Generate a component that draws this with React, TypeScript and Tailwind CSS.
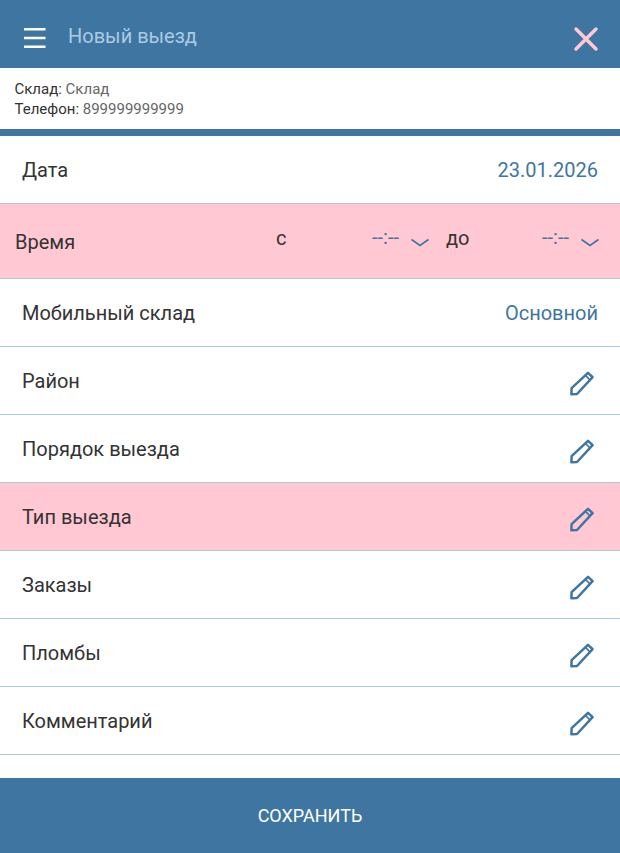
const Pencil = () => (
  <svg width="26" height="26" viewBox="0 0 26 26" fill="none" stroke="#3f76a1" strokeWidth="2.5" strokeLinejoin="round" className="mr-[3px] mt-[5px]">
    <path d="M2.4 24.2 L2.6 18.2 L19 2.8 L23.6 7.2 L8 24 Z" />
    <path d="M16.4 5.4 L21 9.8" strokeWidth="1.6" />
  </svg>
);

const Chevron = () => (
  <svg width="20" height="10" viewBox="0 0 20 10" fill="none" stroke="#3f76a1" strokeWidth="1.6">
    <path d="M1.5 1.5 L10 7.5 L18.5 1.5" />
  </svg>
);

const Row = ({ label, pink }: { label: string; pink?: boolean }) => (
  <div className={`flex h-[68px] items-center justify-between border-b border-[#a9cbdd] px-[22px] text-[20px] text-[#333333] ${pink ? "bg-[#ffc8d3]" : ""}`}>
    <span>{label}</span>
    <Pencil />
  </div>
);

const TimePick = () => (
  <div className="flex items-center">
    <span className="-mt-[1px] text-[20px] leading-[24px] text-[#3f76a1]">--:--</span>
    <div className="ml-[11px] mt-[11px]"><Chevron /></div>
  </div>
);

export default function App() {
  return (
    <div className="flex h-[853px] w-[620px] flex-col overflow-hidden bg-white font-['Roboto',sans-serif]">
      <header className="flex h-[68px] shrink-0 items-center bg-[#3f76a1] pl-[24px] pr-[21px]">
        <svg width="22" height="20" viewBox="0 0 22 20" fill="none" stroke="#ffffff" strokeWidth="2.6" className="mt-[8px] shrink-0">
          <path d="M0 1.3 H21.5 M0 10 H21.5 M0 18.7 H21.5" />
        </svg>
        <span className="ml-[22px] mt-[4px] text-[20px] text-[#a9cbe3]">Новый выезд</span>
        <svg width="26" height="26" viewBox="0 0 26 26" className="ml-auto mt-[9px]" stroke="#ffc8d3" strokeWidth="3.5" strokeLinecap="round">
          <path d="M3 3 L23 23 M23 3 L3 23" />
        </svg>
      </header>
      <div className="h-[61px] shrink-0 pl-[14.5px] pt-[11px] text-[15px] leading-[20px] text-[#333333]">
        <div>Склад: <span className="text-[#666666]">Склад</span></div>
        <div>Телефон: <span className="text-[#666666]">899999999999</span></div>
      </div>
      <div className="h-[7px] shrink-0 bg-[#3f76a1]" />
      <div className="flex h-[68px] shrink-0 items-center justify-between border-b border-[#a9cbdd] px-[22px] text-[20px] text-[#333333]">
        <span>Дата</span>
        <span className="text-[#3f76a1]">23.01.2026</span>
      </div>
      <div className="flex h-[75px] shrink-0 items-center border-b border-[#a9cbdd] bg-[#ffc8d3] pl-[15px] pr-[20px] text-[20px] text-[#333333]">
        <span className="mt-[2px]">Время</span>
        <div className="-mt-[7px] ml-auto flex items-center">
          <span className="w-[96px]">с</span>
          <div className="w-[74px]"><TimePick /></div>
          <span className="w-[96px]">до</span>
          <TimePick />
        </div>
      </div>
      <div className="flex h-[68px] shrink-0 items-center justify-between border-b border-[#a9cbdd] px-[22px] text-[20px] text-[#333333]">
        <span>Мобильный склад</span>
        <span className="text-[#3f76a1]">Основной</span>
      </div>
      <Row label="Район" />
      <Row label="Порядок выезда" />
      <Row label="Тип выезда" pink />
      <Row label="Заказы" />
      <Row label="Пломбы" />
      <Row label="Комментарий" />
      <div className="flex-1" />
      <button className="flex h-[75px] shrink-0 items-center justify-center bg-[#3f76a1] text-[18px] text-white">СОХРАНИТЬ</button>
    </div>
  );
}
